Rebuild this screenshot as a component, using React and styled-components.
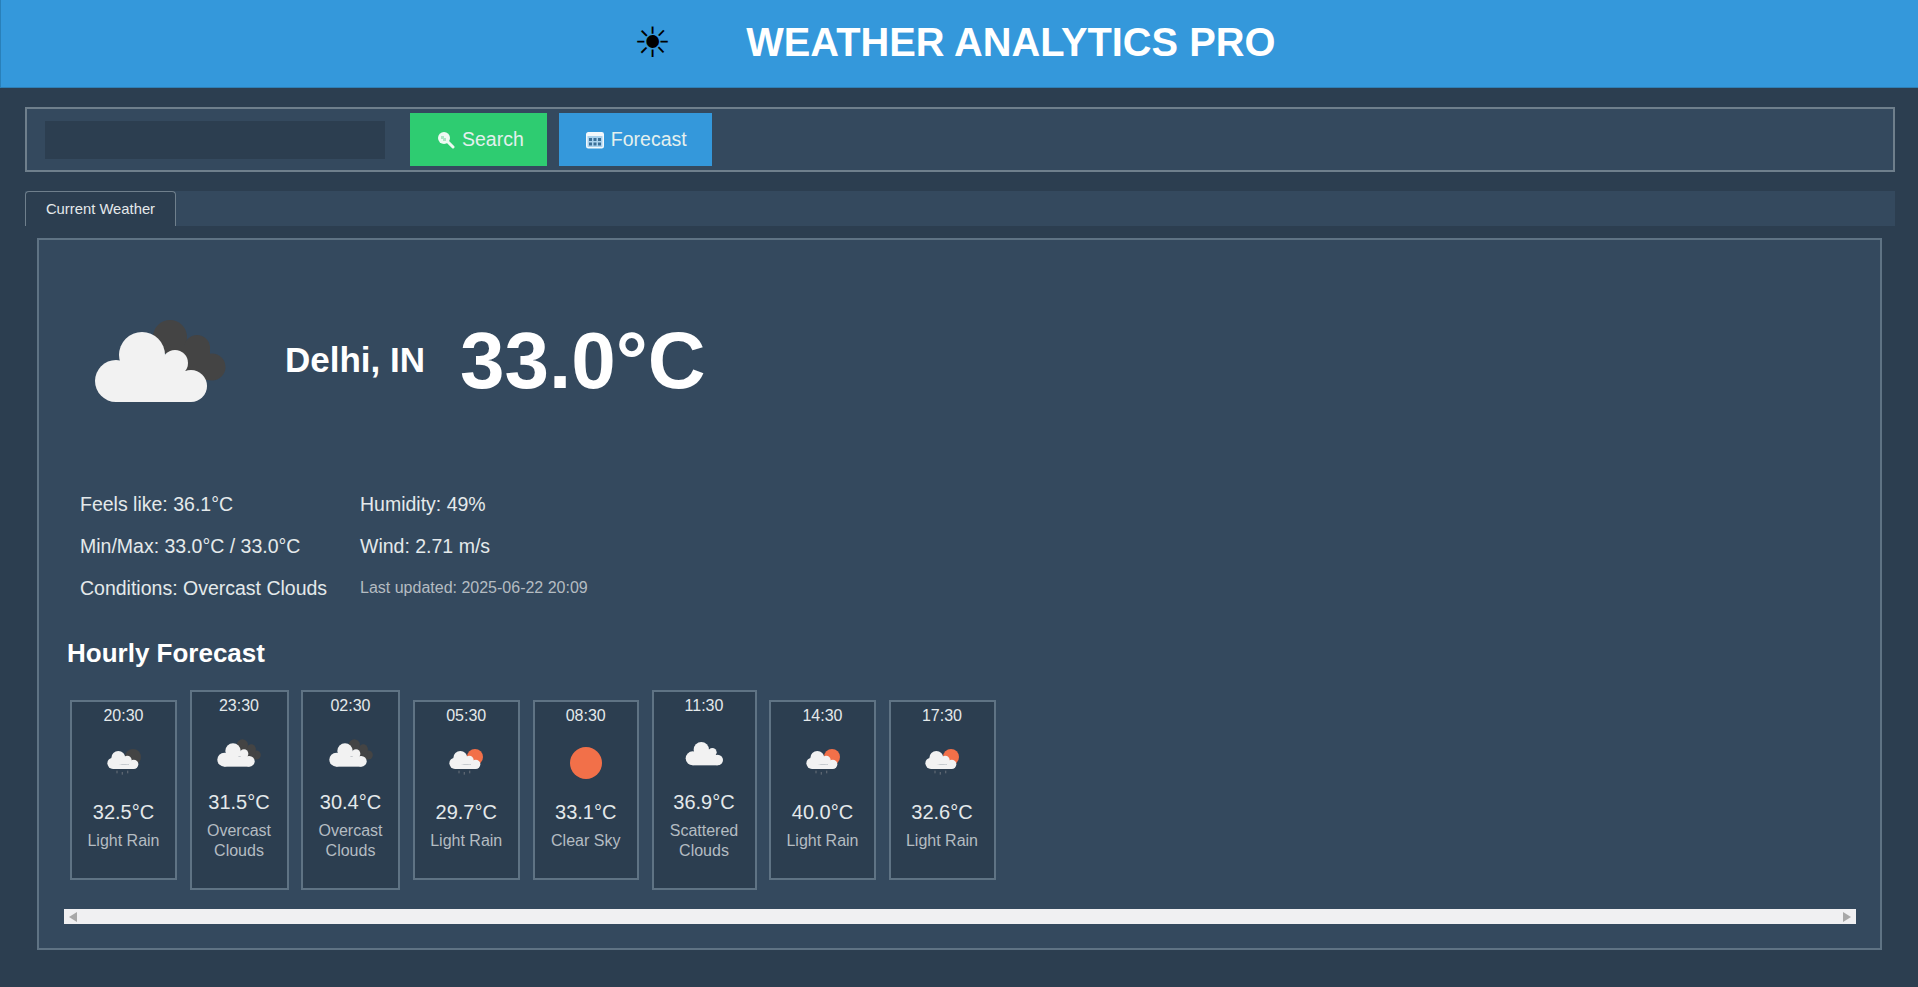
import React from "react";
import styled, { createGlobalStyle } from "styled-components";

const hourly = [
  { time: "20:30", temp: "32.5°C", label: ["Light Rain"], icon: "rainNight", width: 107 },
  { time: "23:30", temp: "31.5°C", label: ["Overcast", "Clouds"], icon: "overcast", width: 99 },
  { time: "02:30", temp: "30.4°C", label: ["Overcast", "Clouds"], icon: "overcast", width: 99 },
  { time: "05:30", temp: "29.7°C", label: ["Light Rain"], icon: "rainDay", width: 107.5 },
  { time: "08:30", temp: "33.1°C", label: ["Clear Sky"], icon: "clear", width: 106.5 },
  { time: "11:30", temp: "36.9°C", label: ["Scattered", "Clouds"], icon: "scattered", width: 105 },
  { time: "14:30", temp: "40.0°C", label: ["Light Rain"], icon: "rainDay", width: 107 },
  { time: "17:30", temp: "32.6°C", label: ["Light Rain"], icon: "rainDay", width: 107 },
];

// all weather icons share a 150 box, hero draws it at 150px and cards at 50px
function BigCloud({ fill, dx = 0, dy = 0 }) {
  return (
    <g fill={fill} transform={`translate(${dx} ${dy})`}>
      <circle cx="31" cy="95" r="21" />
      <circle cx="57" cy="69" r="23" />
      <circle cx="90" cy="77" r="13" />
      <circle cx="106" cy="100" r="16" />
      <rect x="31" y="85" width="75" height="31" />
      <rect x="45" y="70" width="50" height="15" />
    </g>
  );
}

function RainCloud() {
  return (
    <>
      <g fill="#f2f2f2">
        <circle cx="42" cy="76" r="17" />
        <circle cx="58" cy="60" r="21" />
        <circle cx="85" cy="66" r="13" />
        <circle cx="104" cy="79" r="14" />
        <rect x="42" y="79" width="62" height="14" />
        <rect x="50" y="60" width="40" height="19" />
      </g>
      <g fill="#5a6470">
        <rect x="52" y="98" width="4" height="8" />
        <rect x="68" y="102" width="4" height="8" />
        <rect x="84" y="98" width="4" height="8" />
      </g>
    </>
  );
}

function WeatherIcon({ kind, size }) {
  return (
    <svg width={size} height={size} viewBox="0 0 150 150">
      {kind === "overcast" && (
        <>
          <g fill="#444">
            <circle cx="85" cy="51" r="17" />
            <circle cx="112" cy="62" r="13" />
            <circle cx="127" cy="81" r="13.5" />
            <rect x="85" y="60" width="40" height="34" />
          </g>
          <BigCloud fill="#f2f2f2" />
        </>
      )}
      {kind === "scattered" && <BigCloud fill="#f2f2f2" dx={10} dy={-4} />}
      {kind === "clear" && <circle cx="75" cy="75" r="48" fill="#f27049" />}
      {kind === "rainDay" && (
        <>
          <circle cx="102" cy="57" r="24" fill="#f27049" />
          <RainCloud />
        </>
      )}
      {kind === "rainNight" && (
        <>
          <circle cx="102" cy="57" r="24" fill="#444" />
          <RainCloud />
        </>
      )}
    </svg>
  );
}

function SearchGlyph() {
  return (
    <svg width="18" height="18" viewBox="0 0 18 18">
      <circle cx="7" cy="7" r="6" fill="#eef9f2" />
      <path d="M4 5h3v2h2v3H6V8H4z" fill="#a9e6c3" />
      <path d="M10.5 10.5 L16 16" stroke="#eef9f2" strokeWidth="3" strokeLinecap="round" />
    </svg>
  );
}

function CalendarGlyph() {
  return (
    <svg width="18" height="18" viewBox="0 0 18 18">
      <rect x="0.75" y="1.75" width="16.5" height="15" rx="1.5" fill="#a9d2ee" stroke="#f2f8fc" strokeWidth="1.5" />
      <rect x="1" y="2" width="16" height="3" fill="#f2f8fc" />
      <g fill="#3a6f98">
        <rect x="3" y="7" width="3" height="3" />
        <rect x="7.5" y="7" width="3" height="3" />
        <rect x="12" y="7" width="3" height="3" />
        <rect x="3" y="11.5" width="3" height="3" />
        <rect x="7.5" y="11.5" width="3" height="3" />
        <rect x="12" y="11.5" width="3" height="3" />
      </g>
    </svg>
  );
}

export default function App() {
  return (
    <>
      <GlobalStyle />
      <Header>
        <Sun>☀</Sun>
        <Title>WEATHER ANALYTICS PRO</Title>
      </Header>
      <Main>
        <Toolbar>
          <SearchInput />
          <ActionButton $bg="#2ecc71" $left="25px" $right="23px">
            <SearchGlyph />
            Search
          </ActionButton>
          <ActionButton $bg="#3498db" $left="12px" $right="25px">
            <CalendarGlyph />
            Forecast
          </ActionButton>
        </Toolbar>
        <TabBar>
          <Tab>Current Weather</Tab>
        </TabBar>
        <Panel>
          <Hero>
            <WeatherIcon kind="overcast" size={150} />
            <City>Delhi, IN</City>
            <BigTemp>33.0°C</BigTemp>
          </Hero>
          <Details>
            <span>Feels like: 36.1°C</span>
            <span>Humidity: 49%</span>
            <span>Min/Max: 33.0°C / 33.0°C</span>
            <span>Wind: 2.71 m/s</span>
            <span>Conditions: Overcast Clouds</span>
            <Updated>Last updated: 2025-06-22 20:09</Updated>
          </Details>
          <SectionTitle>Hourly Forecast</SectionTitle>
          <CardRow>
            {hourly.map((h) => (
              <Card key={h.time} $width={h.width}>
                <CardTime>{h.time}</CardTime>
                <WeatherIcon kind={h.icon} size={50} />
                <CardTemp>{h.temp}</CardTemp>
                <CardLabel>
                  {h.label.map((line) => (
                    <div key={line}>{line}</div>
                  ))}
                </CardLabel>
              </Card>
            ))}
          </CardRow>
          <ScrollTrack>
            <Arrow $dir="left" />
            <Arrow $dir="right" />
          </ScrollTrack>
        </Panel>
      </Main>
    </>
  );
}

// Styling
const GlobalStyle = createGlobalStyle`
  html, body {
    margin: 0;
    background: #2c3e50;
    font-family: "Liberation Sans", Arial, sans-serif;
    color: #e4e9eb;
  }
`;
const Header = styled.header`
  box-sizing: border-box;
  height: 88px;
  background: #3498db;
  border-left: 1px solid #2980b9;
  border-bottom: 1px solid #2f7fb5;
  display: flex;
  align-items: center;
  justify-content: center;
  gap: 75px;
  padding: 0 10px 2px 0;
`;
const Sun = styled.span`
  font-family: "DejaVu Sans", sans-serif;
  font-size: 42px;
  line-height: 1;
  color: #000;
`;
const Title = styled.h1`
  margin: 0;
  font-size: 39.8px;
  font-weight: 700;
  color: #fff;
`;
const Main = styled.main`
  padding: 19px 23px 37px 25px;
`;
const Toolbar = styled.div`
  box-sizing: border-box;
  height: 65px;
  display: flex;
  align-items: center;
  padding-left: 18px;
  background: #34495e;
  border: 2px solid #6f7f8c;
`;
const SearchInput = styled.input`
  box-sizing: border-box;
  width: 340px;
  height: 38px;
  border: none;
  outline: none;
  background: #2c3e50;
`;
const ActionButton = styled.button`
  box-sizing: border-box;
  height: 53px;
  margin-left: ${(p) => p.$left};
  padding: 0 ${(p) => p.$right} 0 27px;
  display: flex;
  align-items: center;
  gap: 7px;
  border: none;
  background: ${(p) => p.$bg};
  color: #e4f0ee;
  font-family: inherit;
  font-size: 19.5px;
`;
const TabBar = styled.div`
  height: 35px;
  margin-top: 19px;
  background: #34495e;
  display: flex;
`;
const Tab = styled.div`
  box-sizing: border-box;
  width: 151px;
  display: flex;
  align-items: center;
  justify-content: center;
  background: #2c3e50;
  border: 1px solid #6f7f8c;
  border-bottom: none;
  border-radius: 4px 4px 0 0;
  font-size: 14.8px;
`;
const Panel = styled.section`
  margin: 12px 13px 0 12px;
  padding: 46px 24px 24px 25px;
  background: #34495e;
  border: 2px solid #5f7384;
`;
const Hero = styled.div`
  display: flex;
  align-items: center;
  padding-left: 21px;
`;
const City = styled.div`
  margin: 0 0 2px 50px;
  font-size: 35px;
  font-weight: 700;
  color: #fff;
`;
const BigTemp = styled.div`
  margin-left: 35px;
  font-size: 80px;
  font-weight: 700;
  line-height: 1;
  color: #fff;
`;
const Details = styled.div`
  display: grid;
  grid-template-columns: 280px 1fr;
  grid-auto-rows: 42px;
  align-items: center;
  margin-top: 47px;
  padding-left: 16px;
  font-size: 19.5px;
`;
const Updated = styled.span`
  font-size: 16px;
  color: #b4bcc2;
`;
const SectionTitle = styled.h2`
  margin: 29px 0 0 3px;
  font-size: 26px;
  line-height: 30px;
  font-weight: 700;
  color: #fff;
`;
const CardRow = styled.div`
  display: flex;
  align-items: center;
  gap: 12.5px;
  margin-top: 22px;
  padding-left: 6px;
`;
const Card = styled.div`
  box-sizing: border-box;
  width: ${(p) => p.$width}px;
  display: flex;
  flex-direction: column;
  align-items: center;
  padding: 4px 0 27px;
  background: #2c3e50;
  border: 2px solid #5f7384;
`;
const CardTime = styled.div`
  font-size: 16px;
  line-height: 20px;
  margin-bottom: 12px;
`;
const CardTemp = styled.div`
  font-size: 20px;
  line-height: 20px;
  margin-top: 14px;
`;
const CardLabel = styled.div`
  margin-top: 9px;
  font-size: 16px;
  line-height: 20px;
  text-align: center;
  color: #b4bcc2;
`;
const ScrollTrack = styled.div`
  box-sizing: border-box;
  height: 15px;
  margin-top: 19px;
  padding: 0 5px;
  background: #f0f0f2;
  display: flex;
  align-items: center;
  justify-content: space-between;
`;
const Arrow = styled.span`
  width: 0;
  height: 0;
  border-top: 5px solid transparent;
  border-bottom: 5px solid transparent;
  border-left: ${(p) => (p.$dir === "right" ? "8px solid #a8a8a8" : "none")};
  border-right: ${(p) => (p.$dir === "left" ? "8px solid #a8a8a8" : "none")};
`;
